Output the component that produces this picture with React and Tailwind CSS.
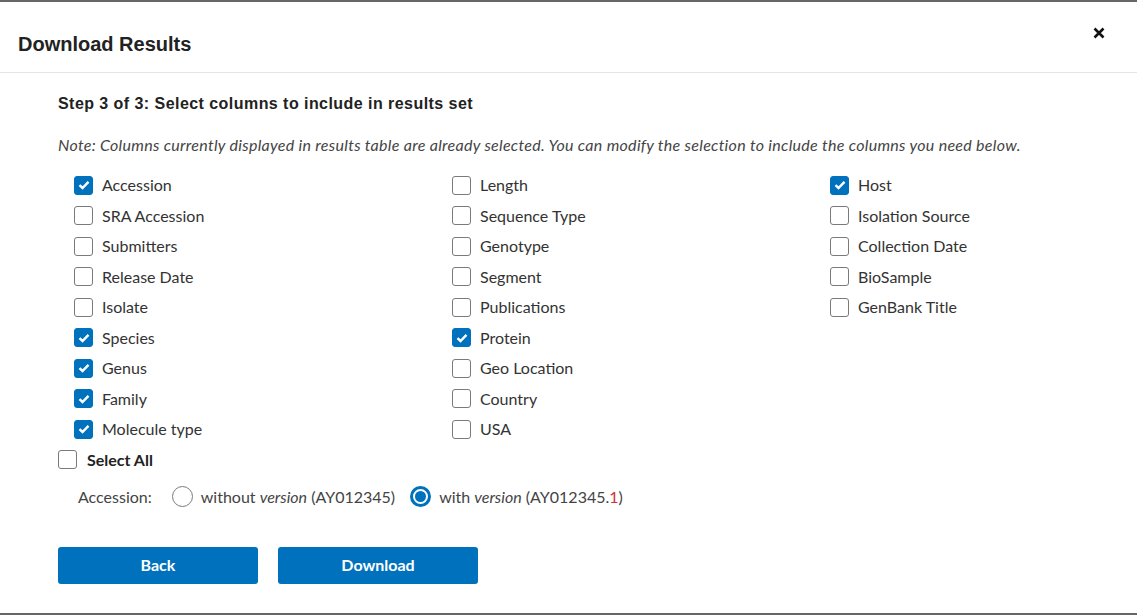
import { useState } from 'react';

const columns = [
  [
    ['Accession', true],
    ['SRA Accession', false],
    ['Submitters', false],
    ['Release Date', false],
    ['Isolate', false],
    ['Species', true],
    ['Genus', true],
    ['Family', true],
    ['Molecule type', true],
  ],
  [
    ['Length', false],
    ['Sequence Type', false],
    ['Genotype', false],
    ['Segment', false],
    ['Publications', false],
    ['Protein', true],
    ['Geo Location', false],
    ['Country', false],
    ['USA', false],
  ],
  [
    ['Host', true],
    ['Isolation Source', false],
    ['Collection Date', false],
    ['BioSample', false],
    ['GenBank Title', false],
  ],
];

const Checkbox = ({ checked }) => (
  <span
    className={`shrink-0 flex items-center justify-center w-[19px] h-[19px] rounded-[3px] border ${
      checked ? 'bg-[#0071bc] border-[#0071bc]' : 'bg-white border-[#7a7a7a]'
    }`}
  >
    {checked && (
      <svg width="12" height="10" viewBox="0 0 12 10">
        <path d="M1.5 5.2 L4.5 8 L10.5 1.8" fill="none" stroke="white" strokeWidth="2.4" />
      </svg>
    )}
  </span>
);

const Radio = ({ checked }) => (
  <span
    className={`shrink-0 flex items-center justify-center w-[21px] h-[21px] rounded-full bg-white ${
      checked ? 'border-[3px] border-[#0071bc]' : 'border border-[#7a7a7a]'
    }`}
  >
    {checked && <span className="w-[11px] h-[11px] rounded-full bg-[#0071bc]" />}
  </span>
);

export default function App() {
  const [version, setVersion] = useState('with');

  return (
    <div className="w-[1137px] h-[615px] bg-white border-t-2 border-b-2 border-[#666] text-[#333] font-['Lato',sans-serif] overflow-hidden">
      {/* Header */}
      <div className="h-[71px] flex items-center justify-between pl-[18px] pr-[32px] border-b border-[#e5e5e5]">
        <h2 className="font-['Liberation_Sans',Arial,sans-serif] font-bold text-[20px] text-[#222] mt-[14px]">
          Download Results
        </h2>
        <button className="text-[#111] mt-[-8px]">
          <svg width="12" height="12" viewBox="0 0 12 12">
            <path d="M1.5 1.5 L10.5 10.5 M10.5 1.5 L1.5 10.5" stroke="currentColor" strokeWidth="2.6" />
          </svg>
        </button>
      </div>

      {/* Body */}
      <div className="pl-[58px] pt-[21px]">
        <p className="font-['Liberation_Sans',Arial,sans-serif] font-bold text-[16px] tracking-[0.45px] text-[#222] leading-[20px]">
          Step 3 of 3: Select columns to include in results set
        </p>
        <p className="italic text-[16px] tracking-[0.3px] text-[#444] mt-[21px] leading-[20px]">
          Note: Columns currently displayed in results table are already selected. You can modify the selection to include the columns you need below.
        </p>

        <div className="flex mt-[15px] pl-[16px]">
          {columns.map((col, i) => (
            <div key={i} className="w-[378px] shrink-0 flex flex-col">
              {col.map(([label, checked]) => (
                <div key={label} className="h-[30.5px] flex items-center gap-[9px]">
                  <Checkbox checked={checked} />
                  <span className="text-[16px] text-[#333]">{label}</span>
                </div>
              ))}
            </div>
          ))}
        </div>

        <div className="h-[30px] flex items-center gap-[10px]">
          <Checkbox checked={false} />
          <span className="text-[16px] font-bold text-[#222]">Select All</span>
        </div>

        <div className="flex items-center mt-[7px] pl-[20px] h-[30px] text-[16px] text-[#444]">
          <span className="mr-[20px]">Accession:</span>
          <label className="flex items-center gap-[8px] mr-[15px] cursor-pointer" onClick={() => setVersion('without')}>
            <Radio checked={version === 'without'} />
            <span>
              without <i>version</i> (AY012345)
            </span>
          </label>
          <label className="flex items-center gap-[8px] cursor-pointer" onClick={() => setVersion('with')}>
            <Radio checked={version === 'with'} />
            <span>
              with <i>version</i> (AY012345.<span className="text-[#d32f2f]">1</span>)
            </span>
          </label>
        </div>

        <div className="flex gap-[20px] mt-[35px]">
          <button className="w-[200px] h-[37px] rounded-[3px] bg-[#0071bc] text-white font-bold text-[16px]">
            Back
          </button>
          <button className="w-[200px] h-[37px] rounded-[3px] bg-[#0071bc] text-white font-bold text-[16px]">
            Download
          </button>
        </div>
      </div>
    </div>
  );
}
